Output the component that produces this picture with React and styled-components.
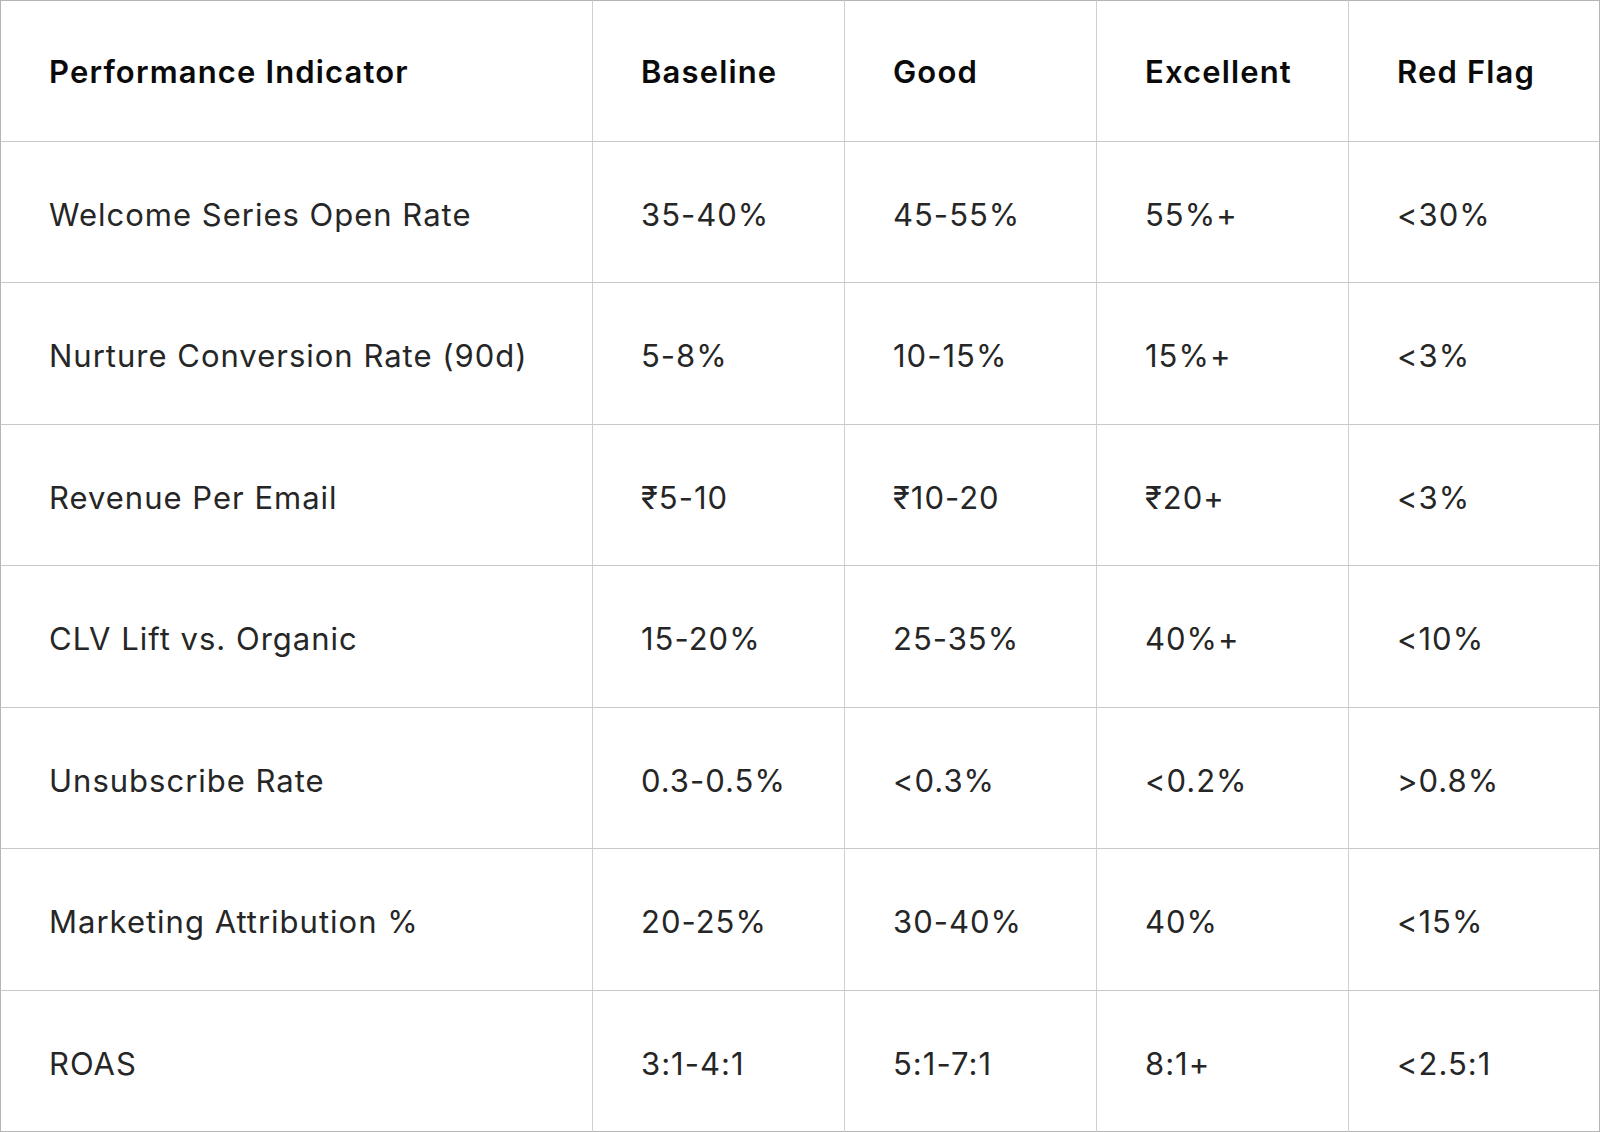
import React from "react";
import styled, { createGlobalStyle } from "styled-components";

const Global = createGlobalStyle`
  html, body { margin: 0; padding: 0; background: #ffffff; }
  * { box-sizing: border-box; }
`;

const Table = styled.div`
  width: 1600px;
  height: 1132px;
  display: grid;
  grid-template-columns: 593px 252px 252px 252px 1fr;
  grid-template-rows: repeat(8, 1fr);
  background: #ffffff;
  font-family: Inter, "Noto Sans", sans-serif;
`;

const Cell = styled.div`
  display: flex;
  align-items: center;
  padding-left: 48px;
  padding-top: ${(p) => (p.$head ? "2px" : "5px")};
  border-right: 1px solid ${(p) => (p.$last ? "#b4b4b4" : "#cfcfcf")};
  border-bottom: 1px solid ${(p) => (p.$bottom ? "#b4b4b4" : "#c8c8c8")};
  border-left: ${(p) => (p.$first ? "1px solid #b4b4b4" : "none")};
  border-top: ${(p) => (p.$top ? "1px solid #b4b4b4" : "none")};
  font-size: 31px;
  font-weight: ${(p) => (p.$head ? 600 : 400)};
  color: ${(p) => (p.$head ? "#0a0a0a" : "#262626")};
  letter-spacing: ${(p) => (p.$head ? "1.15px" : "1px")};
  white-space: nowrap;
`;

const headers = ["Performance Indicator", "Baseline", "Good", "Excellent", "Red Flag"];
const rows = [
  ["Welcome Series Open Rate", "35-40%", "45-55%", "55%+", "<30%"],
  ["Nurture Conversion Rate (90d)", "5-8%", "10-15%", "15%+", "<3%"],
  ["Revenue Per Email", "₹5-10", "₹10-20", "₹20+", "<3%"],
  ["CLV Lift vs. Organic", "15-20%", "25-35%", "40%+", "<10%"],
  ["Unsubscribe Rate", "0.3-0.5%", "<0.3%", "<0.2%", ">0.8%"],
  ["Marketing Attribution %", "20-25%", "30-40%", "40%", "<15%"],
  ["ROAS", "3:1-4:1", "5:1-7:1", "8:1+", "<2.5:1"],
];

export default function App() {
  return (
    <>
      <Global />
      <Table>
        {headers.map((h, i) => (
          <Cell key={h} $head $top $first={i === 0} $last={i === 4}>
            {h}
          </Cell>
        ))}
        {rows.map((r, ri) =>
          r.map((c, ci) => (
            <Cell
              key={ri + "-" + ci}
              $first={ci === 0}
              $last={ci === 4}
              $bottom={ri === rows.length - 1}
            >
              {c}
            </Cell>
          ))
        )}
      </Table>
    </>
  );
}
